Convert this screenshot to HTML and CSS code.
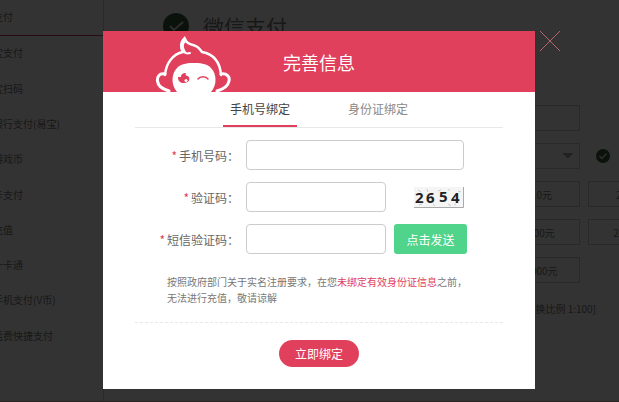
FILE: index.html
```html
<!DOCTYPE html>
<html lang="zh-CN">
<head>
    <meta charset="UTF-8">
    <title>完善信息</title>
    <link rel="stylesheet" href="styles.css">
</head>
<body>
    <div class="page">
        <ul class="sidebar">
            <li class="current">支付</li>
            <li>宝支付</li>
            <li>宝扫码</li>
            <li>银行支付(易宝)</li>
            <li>游戏币</li>
            <li>卡支付</li>
            <li>充值</li>
            <li>一卡通</li>
            <li>手机支付(V币)</li>
            <li>话费快捷支付</li>
        </ul>
        <div class="main">
            <h1 class="pay-title">
                <svg class="pay-icon" viewBox="0 0 26 26">
                    <circle cx="13" cy="13" r="13" fill="#3a5a3a"/>
                    <path d="M7 13l4 4 9-8" fill="none" stroke="#ddd" stroke-width="2"/>
                </svg>
                微信支付
            </h1>
            <div class="pay-form">
                <input class="pay-input" type="text" aria-label="账号">
                <div class="pay-line">
                    <select class="pay-select" aria-label="区服"><option></option></select>
                    <svg class="check-icon" viewBox="0 0 14 14">
                        <circle cx="7" cy="7" r="7" fill="#3a5a3a"/>
                        <path d="M3.5 7l2.500 2.500 4.500-5" fill="none" stroke="#ddd" stroke-width="1.500"/>
                    </svg>
                </div>
                <div class="amounts">
                    <button class="fifth">10元</button>
                    <button>20元</button>
                    <button class="fifth">100元</button>
                    <button>200元</button>
                    <button class="fifth">1000元</button>
                </div>
                <p class="rate">[兑换比例 1:100]</p>
            </div>
        </div>
    </div>

    <div class="overlay">
        <div class="dialog" role="dialog" aria-labelledby="dialogTitle">
            <button class="close" aria-label="关闭">
                <svg viewBox="0 0 20 20"><path d="M0 0L20 20M20 0L0 20" stroke="#b5646d" stroke-width="1"/></svg>
            </button>
            <div class="dialog-header">
                <svg class="monkey" viewBox="0 0 76 56">
                    <g fill="none" stroke="#fff" stroke-width="3" stroke-linecap="round" stroke-linejoin="round">
                        <path d="M10 38C4 37 2 41 2.500 45C3 50 7 53 14 55"/>
                        <path d="M66 38C72 37 75 41 74 45C73 50 69 53 62 55"/>
                        <path d="M10 39C11 27 18 18 28 16C25 11 27 6 30 3C31 7 34 8 38 9C43 10 45 13 47 16C58 18 65 26 66 39" stroke-width="2.500"/>
                        <path d="M28 15C29 17 32 18 35 17" stroke-width="2"/>
                    </g>
                    <path d="M30 0C24 5 24 11 27 16L32 17C28 12 28 8 31 6L35 8C33 6 31 4 30 0Z" fill="#fff"/>
                    <path d="M22 56C16 49 16 38 22 32C27 27 34 27 39 27C44 27 51 27 56 32C62 38 62 49 56 56Z" fill="#fff"/>
                    <path d="M23 41L26 41C26 38 28 37 31 37C30 39 31 40 33 40C36 43 34 47 29 47C25 47 23 45 23 41Z" fill="#e1405c"/>
                    <circle cx="31" cy="44.500" r="1.500" fill="#fff"/>
                    <path d="M43 43C45 40 51 40 53 43" fill="none" stroke="#e1405c" stroke-width="1.500" stroke-linecap="round"/>
                </svg>
                <h2 id="dialogTitle">完善信息</h2>
            </div>
            <div class="dialog-body">
                <div class="tabs" role="tablist">
                    <button class="tab active" role="tab" aria-selected="true">手机号绑定</button>
                    <button class="tab" role="tab" aria-selected="false">身份证绑定</button>
                </div>
                <form class="bind-form">
                    <div class="row">
                        <label for="phone"><span class="star">*</span>手机号码：</label>
                        <input class="wide" type="tel" id="phone">
                    </div>
                    <div class="row">
                        <label for="captcha"><span class="star">*</span>验证码：</label>
                        <input type="text" id="captcha">
                        <svg class="captcha" viewBox="0 0 50 21">
                            <rect width="50" height="21" fill="#f5f5f5"/>
                            <path d="M4 3l3 2M13 2l1 3M24 4l3-1M34 2l2 2M44 4l3 1M5 18l3-1M19 17l2 2M34 17l3 2M28 9l2 1M40 18l2-1" stroke="#ccc"/>
                            <path d="M0 20.500h49.500V0" fill="none" stroke="#aaa"/>
                            <text x="1 12 25 37" y="16 16 15 16">2654</text>
                        </svg>
                    </div>
                    <div class="row">
                        <label for="smsCode"><span class="star">*</span>短信验证码：</label>
                        <input type="text" id="smsCode">
                        <button type="button" class="send">点击发送</button>
                    </div>
                    <p class="notice">按照政府部门关于实名注册要求，在您<em>未绑定有效身份证信息</em>之前，无法进行充值，敬请谅解</p>
                    <div class="submit">
                        <button type="button" class="bind">立即绑定</button>
                    </div>
                </form>
            </div>
        </div>
    </div>
</body>
</html>
```
FILE: styles.css
```css
:root {
    --main-color: #e1405c;
    --send-color: #50d38a;
    --line-color: #e8e8e8;
}

* {
    box-sizing: border-box;
}

body {
    margin: 0;
    font-family: 'Noto Sans CJK SC', sans-serif;
    font-size: 12px;
    color: #666;
    overflow: hidden;
}

h1, h2, p, ul {
    margin: 0;
    padding: 0;
    font-weight: normal;
}

button, input, select {
    font-family: inherit;
    font-size: inherit;
    margin: 0;
    padding: 0;
}

button {
    border: none;
    background: none;
    cursor: pointer;
}

/* 充值页面 */
.page {
    display: flex;
    height: 100vh;
    overflow: hidden;
    border-bottom: 1px solid #d8a8b0;
    color: #777;
}

.sidebar {
    display: flex;
    flex-direction: column;
    flex: none;
    width: 110px;
    height: 88vh;
    margin-left: -7px;
    list-style: none;
    font-size: 10px;
}

.sidebar li {
    display: flex;
    flex: 1;
    align-items: center;
    padding-bottom: 2px;
}

.sidebar .current {
    border-bottom: 1px solid #c04058;
}

.main {
    flex: 1;
    min-width: 0;
    padding: 8px 0 0 59px;
    border-left: 1px solid #ccc;
}

.pay-title {
    display: flex;
    align-items: center;
    gap: 14px;
    height: 35px;
    font-size: 21px;
}

.pay-icon {
    width: 26px;
    height: 26px;
}

.pay-form {
    width: 417px;
    padding-top: 62px;
    font-size: 10px;
}

.pay-input, .pay-select {
    display: block;
    flex: none;
    width: 100%;
    height: 26px;
    border: 1px solid #ccc;
    background: #fff;
}

.pay-select {
    appearance: none;
    background: linear-gradient(to bottom right, #aaa 50%, transparent 50%) 404px 9px/6px 6px no-repeat,
                linear-gradient(to bottom left, #aaa 50%, transparent 50%) 398px 9px/6px 6px no-repeat;
}

.pay-line {
    display: flex;
    align-items: center;
    gap: 16px;
    margin: 12px 0;
}

.check-icon {
    flex: none;
    width: 14px;
    height: 14px;
}

.amounts {
    display: grid;
    grid-template-columns: repeat(6, 77px);
    gap: 12px 8px;
}

.amounts button {
    height: 26px;
    border: 1px solid #ccc;
    color: #777;
}

.amounts .fifth {
    grid-column: 5;
}

.rate {
    margin: 18px -16px 0 0;
    text-align: right;
}

/* 弹窗 */
.overlay {
    position: fixed;
    inset: 0;
    display: flex;
    justify-content: center;
    align-items: flex-start;
    padding: 31px 0 0 19px;
    background: rgba(0,0,0,0.8);
}

.dialog {
    position: relative;
    width: 72%;
    max-width: 432px;
    background: #fff;
}

.close {
    position: absolute;
    top: 0;
    left: 100%;
    width: 20px;
    height: 20px;
    margin-left: 5px;
}

.close svg {
    display: block;
}

.dialog-header {
    position: relative;
    display: flex;
    align-items: center;
    justify-content: center;
    height: 61px;
    background: var(--main-color);
    color: #fff;
}

.dialog-header h2 {
    font-size: 18px;
}

.monkey {
    position: absolute;
    left: 52px;
    bottom: 0;
    width: 76px;
    height: 56px;
}

.dialog-body {
    padding: 0 32px 22px;
}

.tabs {
    display: flex;
    justify-content: center;
    gap: 44px;
    border-bottom: 1px solid var(--line-color);
}

.tab {
    width: 74px;
    height: 35px;
    border-bottom: 2px solid transparent;
    color: #888;
}

.tab.active {
    border-color: var(--main-color);
    color: #444;
}

.bind-form {
    padding-top: 12px;
}

.row {
    display: flex;
    align-items: center;
    margin-bottom: 12px;
}

.row label {
    width: 104px;
    margin-right: 7px;
    text-align: right;
}

.star {
    margin-right: 2px;
    color: var(--main-color);
}

.row input {
    width: 140px;
    height: 30px;
    padding: 0 8px;
    border: 1px solid #ccc;
    border-radius: 4px;
}

.row .wide {
    width: 218px;
}

.captcha {
    width: 50px;
    height: 21px;
    margin-left: 28px;
    font: bold 15px 'Open Sans', sans-serif;
    fill: #222;
}

.send {
    width: 73px;
    height: 30px;
    margin-left: 8px;
    border-radius: 3px;
    background: var(--send-color);
    color: #fff;
}

.notice {
    padding: 8px 32px 16px;
    font-size: 10px;
    line-height: 16px;
    color: #777;
}

.notice em {
    font-style: normal;
    color: var(--main-color);
}

.submit {
    padding-top: 17px;
    border-top: 1px dashed var(--line-color);
    text-align: center;
}

.bind {
    width: 80px;
    height: 27px;
    border-radius: 14px;
    background: var(--main-color);
    color: #fff;
}
```
